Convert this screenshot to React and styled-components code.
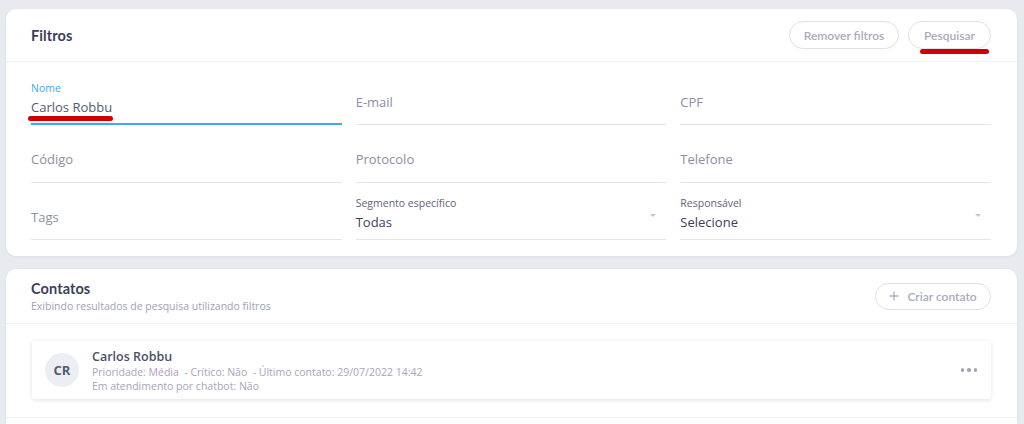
import React from 'react';
import styled, { createGlobalStyle } from 'styled-components';

const Global = createGlobalStyle`
  html, body { margin: 0; padding: 0; background: #e9eaef; }
  body { font-family: "Open Sans", "Liberation Sans", sans-serif; overflow: hidden; }
  * { box-sizing: border-box; }
`;

const Page = styled.div`
  display: flex;
  flex-direction: column;
  gap: 13px;
  padding: 9px 7px 0 6px;
  height: 424px;
`;

const Card = styled.section`
  background: #fff;
  border-radius: 10px;
  box-shadow: 0 1px 3px rgba(40, 45, 80, 0.06);
  ${p => p.$open && 'border-bottom-left-radius: 0; border-bottom-right-radius: 0; flex: 1;'}
`;

const CardHeader = styled.header`
  display: flex;
  align-items: center;
  justify-content: space-between;
  height: ${p => p.$h || 53}px;
  padding: 0 26px 0 25px;
  border-bottom: 1.5px solid #f1f1f5;
`;

const Title = styled.h2`
  margin: 0;
  font-family: "Lato", sans-serif;
  font-weight: 700;
  font-size: 14.5px;
  color: #3b3f5a;
  letter-spacing: 0.1px;
`;

const Subtitle = styled.p`
  margin: 2px 0 0;
  font-size: 10.5px;
  color: #a0a2b3;
`;

const Actions = styled.div`
  display: flex;
  gap: 9px;
`;

const Pill = styled.button`
  position: relative;
  display: flex;
  align-items: center;
  justify-content: center;
  gap: 8px;
  height: ${p => p.$h || 28}px;
  width: ${p => p.$w}px;
  border: 1.5px solid #dfe0e8;
  border-radius: 15px;
  background: #fff;
  font-family: "Lato", sans-serif;
  font-weight: 600;
  font-size: 12px;
  color: #a9abbb;
  padding: 0;
`;

const Mark = styled.span`
  position: absolute;
  left: ${p => p.$l}px;
  top: ${p => p.$t}px;
  width: ${p => p.$w}px;
  height: 5px;
  border-radius: 3px;
  background: #d10000;
`;

const Form = styled.div`
  display: grid;
  grid-template-columns: repeat(3, 1fr);
  column-gap: 14px;
  row-gap: 7.5px;
  padding: 13px 26px 16px 25px;
`;

const Field = styled.div`
  position: relative;
  height: 50px;
  border-bottom: ${p => (p.$active ? '2px solid #42a5f5' : '1.5px solid #e4e5ea')};
  display: flex;
  flex-direction: column;
  justify-content: ${p => (p.$filled ? 'flex-start' : 'center')};
  padding-top: ${p => (p.$filled ? '7px' : '4px')};
`;

const Label = styled.span`
  font-size: 10.5px;
  line-height: 13px;
  color: ${p => (p.$active ? '#42a5f5' : '#5f6379')};
`;

const Value = styled.span`
  margin-top: 3px;
  font-size: 13px;
  line-height: 18px;
  color: ${p => p.$c || '#3d4158'};
`;

const Placeholder = styled.span`
  font-size: 13px;
  color: #8c8fa2;
`;

const Caret = styled.span`
  position: absolute;
  right: 10px;
  top: 24px;
  width: 0;
  height: 0;
  border-left: 3px solid transparent;
  border-right: 3px solid transparent;
  border-top: 3px solid #c4c6d0;
`;

const List = styled.div`
  padding: 17px 26px 18px 26px;
  border-bottom: 1.5px solid #f1f1f5;
`;

const Item = styled.div`
  display: flex;
  align-items: center;
  height: 58px;
  padding: 0 14px 0 13px;
  border-radius: 3px;
  box-shadow: 0 1px 4px rgba(40, 45, 80, 0.14);
`;

const Avatar = styled.div`
  width: 34px;
  height: 34px;
  border-radius: 50%;
  background: #eceef3;
  display: flex;
  align-items: center;
  justify-content: center;
  font-weight: 700;
  font-size: 13px;
  color: #545a75;
  margin-right: 13px;
`;

const Info = styled.div`
  flex: 1;
  display: flex;
  flex-direction: column;
`;

const Name = styled.span`
  font-size: 12.5px;
  font-weight: 600;
  color: #4b4f69;
  line-height: 17px;
`;

const Meta = styled.span`
  font-size: 10.5px;
  color: #a5a7b8;
  line-height: 14px;
  white-space: pre;
`;

const Accent = styled.span`
  color: #b996c4;
`;

const Dots = styled.div`
  display: flex;
  gap: 3px;
  span {
    width: 3.5px;
    height: 3.5px;
    border-radius: 50%;
    background: #a2a4b6;
  }
`;

const fields = [
  { label: 'Nome', value: 'Carlos Robbu', active: true },
  { ph: 'E-mail' },
  { ph: 'CPF' },
  { ph: 'Código' },
  { ph: 'Protocolo' },
  { ph: 'Telefone' },
  { ph: 'Tags' },
  { label: 'Segmento específico', value: 'Todas', select: true },
  { label: 'Responsável', value: 'Selecione', select: true },
];

export default function App() {
  return (
    <Page>
      <Global />
      <Card>
        <CardHeader>
          <Title>Filtros</Title>
          <Actions>
            <Pill $w={110}>Remover filtros</Pill>
            <Pill $w={83}>
              Pesquisar
              <Mark $l={11} $t={27} $w={69} />
            </Pill>
          </Actions>
        </CardHeader>
        <Form>
          {fields.map((f, i) => (
            <Field key={i} $active={f.active} $filled={!!f.label}>
              {f.label ? (
                <>
                  <Label $active={f.active}>{f.label}</Label>
                  <Value $c={f.active ? '#555a70' : undefined}>{f.value}</Value>
                </>
              ) : (
                <Placeholder>{f.ph}</Placeholder>
              )}
              {f.select && <Caret />}
              {f.active && <Mark $l={-3} $t={41} $w={85} />}
            </Field>
          ))}
        </Form>
      </Card>
      <Card $open>
        <CardHeader $h={55}>
          <div>
            <Title>Contatos</Title>
            <Subtitle>Exibindo resultados de pesquisa utilizando filtros</Subtitle>
          </div>
          <Pill $w={116} $h={27}>
            <svg width="10" height="10" viewBox="0 0 10 10">
              <path d="M5 0.5v9M0.5 5h9" stroke="#b2b4c3" strokeWidth="1.4" />
            </svg>
            Criar contato
          </Pill>
        </CardHeader>
        <List>
          <Item>
            <Avatar>CR</Avatar>
            <Info>
              <Name>Carlos Robbu</Name>
              <Meta>
                Prioridade: <Accent>Média</Accent>  - Crítico: Não  - Último contato: 29/07/2022 14:42
              </Meta>
              <Meta>Em atendimento por chatbot: Não</Meta>
            </Info>
            <Dots>
              <span />
              <span />
              <span />
            </Dots>
          </Item>
        </List>
      </Card>
    </Page>
  );
}
